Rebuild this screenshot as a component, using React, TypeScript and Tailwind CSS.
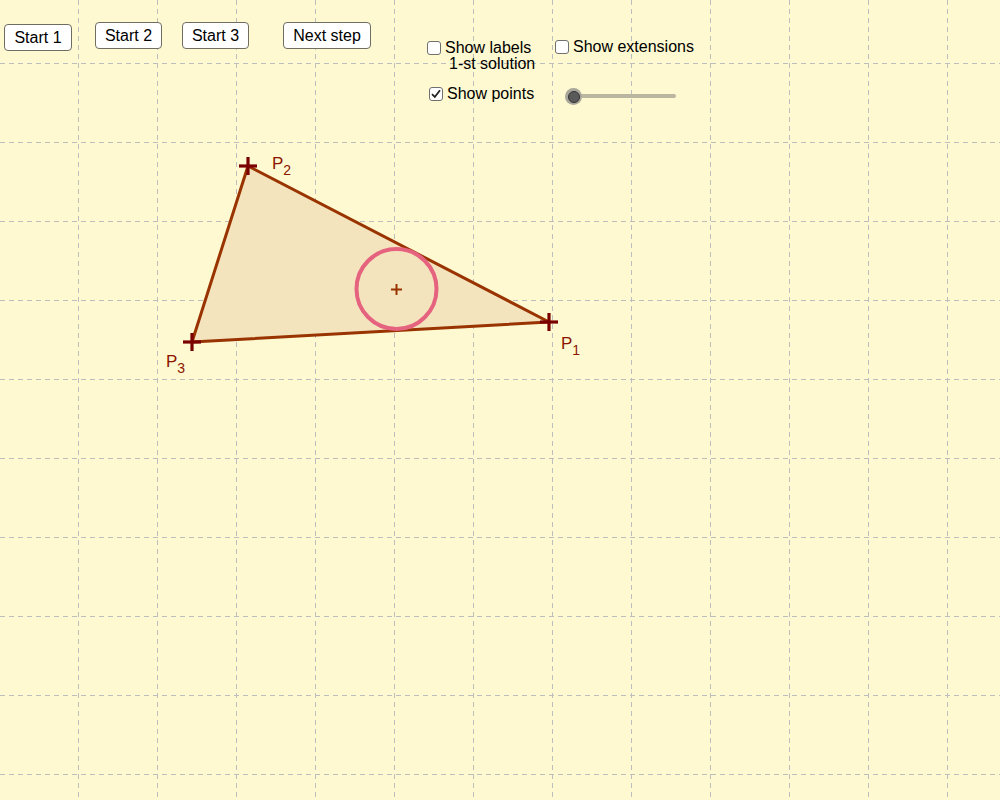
import React from "react";

const P1 = { x: 549, y: 322 };
const P2 = { x: 248, y: 166 };
const P3 = { x: 192, y: 342 };

function Cross({ x, y }: { x: number; y: number }) {
  return (
    <g stroke="#7a0000" strokeWidth={3.2}>
      <line x1={x - 9} y1={y} x2={x + 9} y2={y} />
      <line x1={x} y1={y - 9} x2={x} y2={y + 9} />
    </g>
  );
}

function Label({ x, y, sub }: { x: number; y: number; sub: string }) {
  return (
    <text x={x} y={y} fill="#8b1500" fontSize={17} fontFamily="'Liberation Sans', Arial, sans-serif">
      P
      <tspan fontSize={14} dy={6}>
        {sub}
      </tspan>
    </text>
  );
}

function Checkbox({ checked }: { checked?: boolean }) {
  return (
    <span className="flex h-[14px] w-[14px] shrink-0 items-center justify-center rounded-[3px] border border-[#707070] bg-white">
      {checked && (
        <svg width="12" height="12" viewBox="0 0 12 12">
          <path d="M2 6.2 L4.8 9 L10 2.2" fill="none" stroke="#222" strokeWidth="1.8" />
        </svg>
      )}
    </span>
  );
}

function GgbButton({ label, className }: { label: string; className: string }) {
  return (
    <button
      className={`flex h-[27px] items-center justify-center whitespace-nowrap rounded-[4px] border border-[#6f6c62] bg-white text-[16px] leading-none text-black ${className}`}
    >
      {label}
    </button>
  );
}

export default function App() {
  const vLines = Array.from({ length: 12 }, (_, i) => 78.5 + i * 79);
  const hLines = Array.from({ length: 10 }, (_, i) => 63.5 + i * 79);

  return (
    <div
      className="relative h-[800px] w-[1000px] overflow-hidden bg-[#fef9d0]"
      style={{ fontFamily: "'Liberation Sans', Arial, sans-serif" }}
    >
      {/* drawing pad */}
      <svg className="absolute inset-0" width={1000} height={800}>
        {vLines.map((x) => (
          <line key={"v" + x} x1={x} y1={0} x2={x} y2={800} stroke="#bdbdbd" strokeWidth={1} strokeDasharray="5 4" />
        ))}
        {hLines.map((y) => (
          <line key={"h" + y} x1={0} y1={y} x2={1000} y2={y} stroke="#bdbdbd" strokeWidth={1} strokeDasharray="5 4" />
        ))}

        <polygon
          points={`${P1.x},${P1.y} ${P2.x},${P2.y} ${P3.x},${P3.y}`}
          fill="#f3e4bd"
          stroke="#993300"
          strokeWidth={3}
          strokeLinejoin="round"
        />

        <circle cx={396.5} cy={289} r={40} fill="none" stroke="#e5637f" strokeWidth={4} />
        <g stroke="#993300" strokeWidth={2}>
          <line x1={391} y1={289.5} x2={402} y2={289.5} />
          <line x1={396.5} y1={284} x2={396.5} y2={295} />
        </g>

        <Cross x={P1.x} y={P1.y} />
        <Cross x={P2.x} y={P2.y} />
        <Cross x={P3.x} y={P3.y} />

        <Label x={272} y={169} sub="2" />
        <Label x={166} y={367} sub="3" />
        <Label x={561} y={349} sub="1" />
      </svg>

      {/* controls */}
      <div className="relative flex items-start text-[16px] leading-[18px] text-black">
        <div className="flex items-start pl-[4px] pt-[22px]">
          <GgbButton label="Start 1" className="mt-[2px] w-[68px]" />
          <GgbButton label="Start 2" className="ml-[23px] w-[67px]" />
          <GgbButton label="Start 3" className="ml-[20px] w-[67px]" />
          <GgbButton label="Next step" className="ml-[34px] w-[88px]" />
        </div>

        <div className="ml-[56px] flex w-[128px] flex-col pt-[39px]">
          <label className="flex items-center gap-[4px]">
            <Checkbox />
            <span>Show labels</span>
          </label>
          <span className="-mt-[2px] pl-[22px] whitespace-nowrap">1-st solution</span>
          <label className="mt-[12px] flex items-center gap-[4px] pl-[2px]">
            <Checkbox checked />
            <span>Show points</span>
          </label>
        </div>

        <div className="flex flex-col pt-[38px]">
          <label className="flex items-center gap-[4px]">
            <Checkbox />
            <span className="whitespace-nowrap">Show extensions</span>
          </label>
          <div className="relative ml-[9px] mt-[30px] h-[20px] w-[116px]">
            <div className="absolute left-[8px] right-[4px] top-[8px] h-[4px] rounded-full bg-[#bab6a0]" />
            <div className="absolute left-[1px] top-[2px] flex h-[17px] w-[17px] items-center justify-center rounded-full bg-[#a8a59a]">
              <div className="h-[12px] w-[12px] rounded-full border border-[#333] bg-[#5a5a5a]" />
            </div>
          </div>
        </div>
      </div>
    </div>
  );
}
